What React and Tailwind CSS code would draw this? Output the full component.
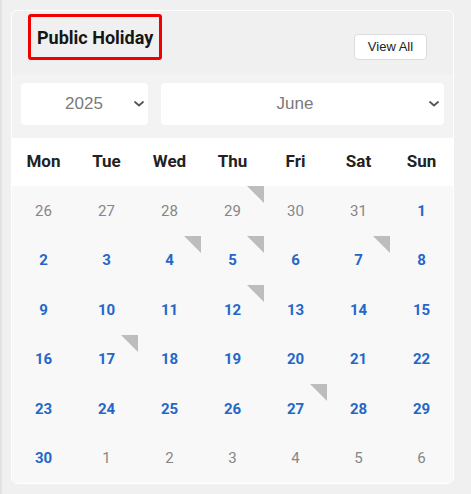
import React from 'react';

const WEEKDAYS = ['Mon', 'Tue', 'Wed', 'Thu', 'Fri', 'Sat', 'Sun'];

// 6 weeks for June 2025, starting Monday 26 May
const buildDays = () => {
  const days = [];
  for (let d = 26; d <= 31; d++) days.push({ n: d, cur: false });
  for (let d = 1; d <= 30; d++) days.push({ n: d, cur: true });
  for (let d = 1; days.length < 42; d++) days.push({ n: d, cur: false });
  return days;
};

// cells that carry the grey holiday corner (index in the grid)
const MARKED = [3, 9, 10, 12, 17, 22, 32];

function Chevron() {
  return (
    <svg width="10" height="6" viewBox="0 0 10 6" className="shrink-0">
      <path d="M1 1l4 3.5L9 1" fill="none" stroke="#555" strokeWidth="1.8" strokeLinecap="round" strokeLinejoin="round" />
    </svg>
  );
}

export default function App() {
  const days = buildDays();

  return (
    <div className="min-h-[494px] w-[471px] bg-[#f0f0f0] border-l-2 border-[#e3e3e3] pt-[10px] pl-[9px]">
      <div className="w-[443px] border border-white rounded-md bg-[#f0f0f0] overflow-hidden">
        {/* header */}
        <div className="flex justify-between h-[63px] pl-[16px] pr-[26px] pt-[3px]">
          <div className="h-[46px] px-[6px] flex items-center border-[3px] border-[#f10000] rounded-[3px]">
            <span className="font-['Roboto',sans-serif] font-bold text-[18px] text-[#161616]">Public Holiday</span>
          </div>
          <button className="mt-[20px] h-[26px] w-[73px] bg-white border border-[#dcdcdc] rounded-[4px] font-['Liberation_Sans',Arial,sans-serif] text-[13px] text-[#222]">
            View All
          </button>
        </div>

        {/* body */}
        <div className="bg-[#f3f3f3]">
          <div className="flex gap-[13px] px-[9px] pt-[9px]">
            <div className="h-[42px] w-[127px] bg-white rounded-[4px] flex items-center pl-[13px] pr-[4px]">
              <span className="flex-1 text-center font-['Liberation_Sans',Arial,sans-serif] text-[17px] text-[#7a7a7a]">2025</span>
              <Chevron />
            </div>
            <div className="h-[42px] flex-1 bg-white rounded-[4px] flex items-center pr-[5px]">
              <span className="flex-1 text-center font-['Liberation_Sans',Arial,sans-serif] text-[17px] text-[#7a7a7a]">June</span>
              <Chevron />
            </div>
          </div>

          {/* calendar */}
          <div className="mt-[13px] font-['Roboto',sans-serif]">
            <div className="grid grid-cols-7 h-[48px] bg-white">
              {WEEKDAYS.map((w) => (
                <div key={w} className="flex items-center justify-center font-bold text-[17px] text-[#222]">
                  {w}
                </div>
              ))}
            </div>
            <div className="grid grid-cols-7 grid-rows-6 h-[297px] bg-[#f8f8f8]">
              {days.map((d, i) => (
                <div key={i} className="relative flex items-center justify-center">
                  {MARKED.includes(i) && (
                    <span className="absolute top-0 right-0 w-0 h-0 border-l-[17px] border-l-transparent border-t-[17px] border-t-[#bdbdbd]" />
                  )}
                  <span
                    className={
                      d.cur
                        ? 'text-[15px] font-bold text-[#2467c8]'
                        : 'text-[15px] text-[#868686]'
                    }
                  >
                    {d.n}
                  </span>
                </div>
              ))}
            </div>
          </div>
        </div>
      </div>
    </div>
  );
}
